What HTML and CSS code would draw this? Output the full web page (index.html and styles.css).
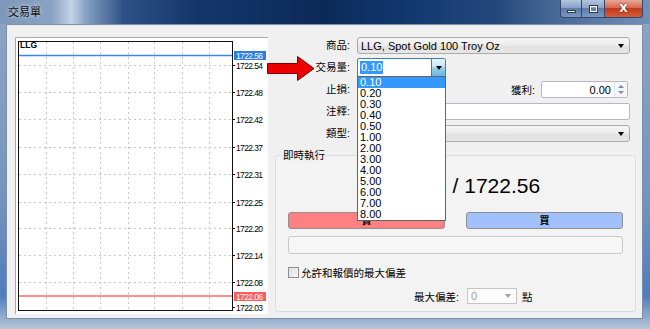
FILE: index.html
```html
<!DOCTYPE html>
<html lang="zh-Hant">
<head>
  <meta charset="UTF-8">
  <title>交易單</title>
  <link rel="stylesheet" href="styles.css">
</head>
<body>

  <div class="window">
    <div class="titlebar">
      <span class="title">交易單</span>
      <div class="caption">
        <span class="cap-btn cap-min"><i></i></span>
        <span class="cap-btn cap-max"><i></i></span>
        <span class="cap-btn cap-close">X</span>
      </div>
    </div>

    <div class="frame">
      <div class="client">

        <!-- 價格圖 -->
        <svg class="chart" width="253" height="277" viewBox="0 0 253 277">
          <rect x="0" y="0" width="253" height="277" fill="#fff"/>
          <path d="M0.5 277V0.5H253" fill="none" stroke="#a9a9a9"/>
          <g stroke="#c8c8c8" stroke-dasharray="2 3">
            <path d="M31.5 5V273M58.5 5V273M85.5 5V273M113.5 5V273M139.5 5V273M167.5 5V273M194.5 5V273"/>
            <path d="M4 28.5H217M4 55.5H217M4 82.5H217M4 110.5H217M4 137.5H217M4 165.5H217M4 191.5H217M4 218.5H217M4 245.5H217"/>
          </g>
          <line x1="4" y1="18.5" x2="217" y2="18.5" stroke="#3d84e6" stroke-width="1.5"/>
          <line x1="4" y1="259" x2="217" y2="259" stroke="#ff8f8f" stroke-width="2"/>
          <rect x="3.5" y="4.5" width="214" height="269" fill="none" stroke="#111"/>
          <g stroke="#111">
            <path d="M218 28.5h2M218 55.5h2M218 82.5h2M218 110.5h2M218 137.5h2M218 165.5h2M218 191.5h2M218 218.5h2M218 245.5h2M218 270.5h2"/>
          </g>
          <text x="5" y="11" class="chart-sym">LLG</text>
          <rect x="219" y="14" width="32" height="9" fill="#2a7de1"/>
          <rect x="219" y="255" width="32" height="9" fill="#ff5c5c"/>
          <g class="axis">
            <text x="221" y="21.5" textLength="27" fill="#fff">1722.56</text>
            <text x="221" y="31.5" textLength="27">1722.54</text>
            <text x="221" y="58.5" textLength="27">1722.48</text>
            <text x="221" y="85.5" textLength="27">1722.42</text>
            <text x="221" y="113.5" textLength="27">1722.37</text>
            <text x="221" y="140.5" textLength="27">1722.31</text>
            <text x="221" y="168.5" textLength="27">1722.25</text>
            <text x="221" y="194.5" textLength="27">1722.20</text>
            <text x="221" y="221.5" textLength="27">1722.14</text>
            <text x="221" y="248.5" textLength="27">1722.08</text>
            <text x="221" y="262.5" textLength="27" fill="#fff">1722.06</text>
            <text x="221" y="273.5" textLength="27">1722.03</text>
          </g>
        </svg>

        <!-- 下單 -->
        <div class="order">
          <div class="fields">
            <label>商品:</label>
            <div class="combo">LLG, Spot Gold 100 Troy Oz<span class="caret"></span></div>

            <label>交易量:</label>
            <div>
              <div class="volume">
                <span class="sel">0.10</span>
                <span class="drop-btn"><span class="caret"></span></span>
                <ul class="volume-list">
                  <li class="on">0.10</li>
                  <li>0.20</li>
                  <li>0.30</li>
                  <li>0.40</li>
                  <li>0.50</li>
                  <li>1.00</li>
                  <li>2.00</li>
                  <li>3.00</li>
                  <li>4.00</li>
                  <li>5.00</li>
                  <li>6.00</li>
                  <li>7.00</li>
                  <li>8.00</li>
                </ul>
              </div>
            </div>

            <label>止損:</label>
            <div class="sl-row">
              <div class="input stop"></div>
              <span class="tp-label">獲利:</span>
              <div class="input tp">
                <span class="val">0.00</span>
                <span class="spin"><b class="up"></b><b class="down"></b></span>
              </div>
            </div>

            <label>注釋:</label>
            <div class="input"></div>

            <label>類型:</label>
            <div class="combo"><span class="caret"></span></div>
          </div>

          <div class="group">
            <div class="group-title">即時執行</div>
            <div class="quote">1722.06 / 1722.56</div>
            <div class="trade">
              <div class="btn sell">賣</div>
              <div class="btn buy">買</div>
            </div>
            <div class="bar"></div>
            <div class="check-row">
              <span class="checkbox"></span>
              <span>允許和報價的最大偏差</span>
            </div>
            <div class="dev-row">
              <span>最大偏差:</span>
              <div class="dev-combo">0<span class="caret"></span></div>
              <span class="unit">點</span>
            </div>
          </div>
        </div>

      </div>
    </div>

    <!-- 提示箭頭 -->
    <svg class="pointer" width="48" height="27" viewBox="0 0 48 27">
      <polygon points="0.5,8.5 30.5,8.5 30.5,1.5 47,13.5 30.5,25.5 30.5,18.5 0.5,18.5" fill="#ee0000" stroke="#7a0000"/>
    </svg>
  </div>

</body>
</html>
```

FILE: styles.css
```css
* {
  box-sizing: border-box;
}

body {
  margin: 0;
  font-family: "Liberation Sans", "Noto Sans CJK TC", sans-serif;
  font-size: 11px;
  color: #000;
  background: #fff;
}

/* 視窗外框 */
.window {
  position: relative;
  width: 650px;
  height: 329px;
  display: flex;
  flex-direction: column;
  background: linear-gradient(#8ea6c3, #7594bd 60%, #4f7cbd 90%, #b9c6d8);
}

.titlebar {
  height: 24px;
  display: flex;
  background: linear-gradient(to right, #7e98b9 0%, #8aa3c3 8%, #c3d3e6 11%, #8aa5c7 13%, #2e5186 19%, #143669 30%, #0b2a5a 50%, #123a70 64%, #24477b 76%, #4a6b98 86%, #7390b8 100%);
}

.title {
  margin: 5px 0 0 8px;
  font-size: 11px;
  line-height: 14px;
  color: #111;
  text-shadow: 0 0 4px #dfe8f3;
}

.caption {
  margin-left: auto;
  margin-right: 7px;
  display: flex;
  align-self: flex-start;
}

.cap-btn {
  height: 18px;
  display: flex;
  align-items: center;
  justify-content: center;
  border: 1px solid #34496a;
  border-top: none;
}

.cap-min {
  width: 22px;
  border-radius: 0 0 0 4px;
  background: linear-gradient(#b4c5dc, #8aa3c6 45%, #5d7ca6 50%, #7a98c2);
}

.cap-min i {
  width: 9px;
  height: 3px;
  margin-top: 5px;
  background: #fff;
  border: 1px solid #2b3a52;
}

.cap-max {
  width: 23px;
  border-left: none;
  background: linear-gradient(#b4c5dc, #8aa3c6 45%, #5d7ca6 50%, #7a98c2);
}

.cap-max i {
  width: 9px;
  height: 8px;
  border: 1px solid #2b3a52;
  outline: 1px solid #fff;
  outline-offset: -2px;
}

.cap-close {
  width: 38px;
  border-left: none;
  border-radius: 0 0 4px 0;
  background: linear-gradient(#e9a797, #d66a50 45%, #c23b1f 50%, #d65b3b);
  color: #fff;
  font-family: "DejaVu Sans", sans-serif;
  font-size: 11px;
  font-weight: bold;
  text-shadow: 0 0 2px #5a1005;
}

.frame {
  flex: 1;
  display: flex;
  padding: 0 7px 10px 6px;
}

.client {
  flex: 1;
  display: flex;
  align-items: flex-start;
  border: 1px solid #7d8fa8;
  background: #f0f0f0;
}

/* 價格圖 */
.chart {
  display: block;
  margin: 12px 0 0 8px;
}

.chart-sym {
  font-family: "Liberation Sans", sans-serif;
  font-size: 8.5px;
  font-weight: bold;
}

.axis text {
  font-family: "Liberation Sans", sans-serif;
  font-size: 8.5px;
}

/* 下單欄位 */
.order {
  flex: 1;
  display: flex;
  flex-direction: column;
}

.fields {
  display: grid;
  grid-template-columns: 82px 1fr;
  grid-auto-rows: 17px;
  column-gap: 7px;
  row-gap: 5px;
  margin: 12px 12px 0 0;
}

.fields label,
.tp-label,
.group,
.dev-row {
  font-size: 10.5px;
}

.fields label {
  text-align: right;
  line-height: 17px;
  white-space: nowrap;
}

.combo {
  display: flex;
  align-items: center;
  padding-left: 3px;
  border: 1px solid #a9a9a9;
  border-radius: 3px;
  background: linear-gradient(#f6f6f6, #ececec 50%, #e0e0e0 51%, #e6e6e6);
  white-space: nowrap;
}

.caret {
  width: 0;
  height: 0;
  margin-left: auto;
  margin-right: 5px;
  border-left: 3.5px solid transparent;
  border-right: 3.5px solid transparent;
  border-top: 4px solid #000;
}

.volume {
  position: relative;
  width: 89px;
  height: 19px;
  margin-top: -1px;
  display: flex;
  align-items: center;
  padding-left: 2px;
  border: 1px solid #3c7fb1;
  border-radius: 2px;
  background: #fff;
}

.sel {
  padding: 0 1px;
  line-height: 13px;
  background: #3399ff;
  color: #fff;
}

.drop-btn {
  margin-left: auto;
  width: 14px;
  align-self: stretch;
  display: flex;
  align-items: center;
  justify-content: center;
  border-left: 1px solid #3c7fb1;
  background: linear-gradient(#e5f4fc, #c4e5f6 50%, #98d1ef 50%, #6cb5dc);
}

.drop-btn .caret {
  margin: 0;
}

.volume-list {
  position: absolute;
  top: 100%;
  left: -1px;
  z-index: 5;
  width: 89px;
  height: 145px;
  margin: 0;
  padding: 0;
  list-style: none;
  background: #fff;
  border: 1px solid #646464;
  line-height: 11px;
}

.volume-list li {
  height: 11px;
  padding-left: 2px;
}

.volume-list li.on {
  background: #3399ff;
  color: #fff;
}

.input {
  height: 17px;
  border: 1px solid #b5b8bf;
  border-radius: 2px;
  background: #fff;
}

.sl-row {
  display: flex;
  align-items: center;
}

.stop {
  width: 83px;
}

.tp-label {
  margin-left: auto;
}

.tp {
  width: 87px;
  margin: 0 2px 0 6px;
  display: flex;
  align-items: center;
  justify-content: flex-end;
}

.tp .val {
  padding-right: 3px;
}

.spin {
  width: 13px;
  height: 100%;
  display: flex;
  flex-direction: column;
  align-items: center;
  justify-content: space-evenly;
  border-left: 1px solid #dfe3ea;
  background: #f4f6f9;
}

.spin b {
  width: 0;
  height: 0;
  border-left: 3px solid transparent;
  border-right: 3px solid transparent;
}

.spin .up {
  border-bottom: 3px solid #7b8ca6;
}

.spin .down {
  border-top: 3px solid #7b8ca6;
}

/* 即時執行 */
.group {
  height: 157px;
  margin: 13px 6px 0 7px;
  padding: 0 12px;
  border: 1px solid #d7dde4;
  border-radius: 3px;
  background: #f3f3f3;
}

.group-title {
  width: fit-content;
  margin: -7px 0 0 -6px;
  padding: 0 1px;
  line-height: 13px;
  background: #f0f0f0;
}

.quote {
  margin-top: 12px;
  font-family: "Liberation Sans", sans-serif;
  font-size: 21px;
  line-height: 24px;
  text-align: center;
}

.trade {
  display: grid;
  grid-template-columns: 1fr 1fr;
  column-gap: 21px;
  height: 17px;
  margin-top: 14px;
}

.btn {
  border: 1px solid #8e9094;
  border-radius: 3px;
  font-size: 10px;
  font-weight: bold;
  line-height: 15px;
  text-align: center;
}

.sell {
  background: #ff8080;
}

.buy {
  background: #a2c1fc;
}

.bar {
  height: 18px;
  margin-top: 7px;
  border: 1px solid #c9c9c9;
  border-radius: 3px;
  background: #f6f6f6;
}

.check-row {
  height: 14px;
  margin-top: 11px;
  display: flex;
  align-items: center;
  gap: 2px;
}

.checkbox {
  width: 11px;
  height: 11px;
  border: 1px solid #8f8f8f;
  background: linear-gradient(135deg, #dcdcdc, #fafafa);
}

.dev-row {
  height: 16px;
  margin-top: 9px;
  padding-left: 126px;
  display: flex;
  align-items: center;
}

.dev-combo {
  width: 50px;
  height: 16px;
  margin-left: 8px;
  display: flex;
  align-items: center;
  padding-left: 3px;
  border: 1px solid #c6c6c6;
  background: #fbfbfb;
  color: #a3a3a3;
  font-size: 11px;
}

.dev-combo .caret {
  border-top-color: #a3a3a3;
}

.unit {
  margin-left: 5px;
}

/* 提示箭頭 */
.pointer {
  position: absolute;
  left: 267px;
  top: 55px;
}
```
